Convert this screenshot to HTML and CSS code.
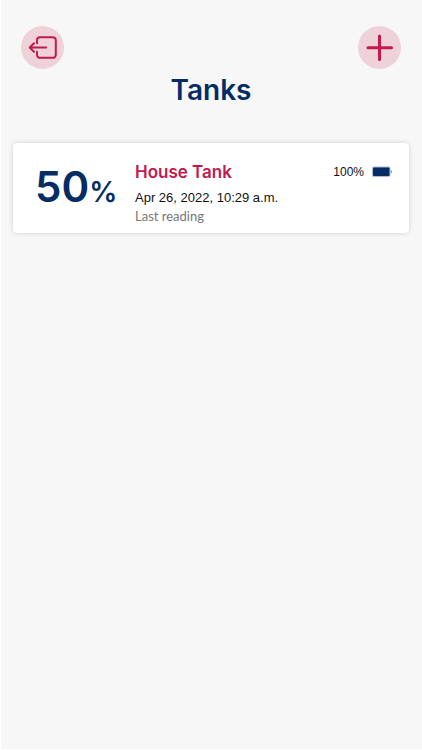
FILE: index.html
```html
<!DOCTYPE html>
<html lang="en">
<head>
<meta charset="utf-8">
<meta name="viewport" content="width=device-width, initial-scale=1">
<title>Tanks</title>
<link rel="stylesheet" href="styles.css">
</head>
<body>
<div class="screen">
  <header class="header">
    <nav class="toolbar">
      <button class="round-button" type="button" aria-label="Sign out">
        <svg width="43" height="43" viewBox="0 0 43 43" aria-hidden="true">
          <path d="M16 17.300V14.200a3 3 0 0 1 3-3H31.800a3 3 0 0 1 3 3V28.800a3 3 0 0 1-3 3H19a3 3 0 0 1-3-3V25.700M25.200 21.500H8.700M13 17.200L8.700 21.500L13 25.800"/>
        </svg>
      </button>
      <button class="round-button" type="button" aria-label="Add tank">
        <svg class="plus" width="43" height="43" viewBox="0 0 43 43" aria-hidden="true">
          <path d="M21.500 10V33.600M10 21.800H33.500"/>
        </svg>
      </button>
    </nav>
    <h1 class="title">Tanks</h1>
  </header>
  <main>
    <article class="card">
      <p class="level">50<span class="unit">%</span></p>
      <div class="details">
        <h2 class="name">House Tank</h2>
        <p class="date">Apr 26, 2022, 10:29 a.m.</p>
        <p class="caption">Last reading</p>
      </div>
      <div class="battery">
        <span>100%</span>
        <svg width="20" height="12" viewBox="0 0 20 12" aria-hidden="true">
          <rect class="shell" x="0" y=".5" width="18.500" height="10.500" rx="2"/>
          <rect class="charge" x="1" y="1.500" width="16.500" height="8.500" rx="1"/>
          <path class="tip" d="M18.800 4q1.200 .6 1.200 1.800t-1.200 1.800z"/>
        </svg>
      </div>
    </article>
  </main>
</div>
</body>
</html>
```
FILE: styles.css
```css
* {
  box-sizing: border-box;
}

body {
  margin: 0;
  background: #fff;
  font-family: Inter, "Liberation Sans", sans-serif;
  color: #111;
}

h1, h2, p {
  margin: 0;
}

.screen {
  min-height: calc(100vh - 1px);
  margin: 0 0 1px 1px;
  background: #f7f7f7;
}

.header {
  padding: 26px 21px 0 20px;
}

.toolbar {
  display: flex;
  justify-content: space-between;
}

.round-button {
  width: 43px;
  height: 43px;
  padding: 0;
  border: 0;
  border-radius: 50%;
  background: #efd1da;
}

.round-button svg {
  display: block;
  fill: none;
  stroke: #c2194f;
  stroke-width: 2;
  stroke-linecap: round;
  stroke-linejoin: round;
}

.round-button .plus {
  stroke-width: 3;
}

.title {
  font-size: 28px;
  line-height: 42px;
  font-weight: 600;
  text-align: center;
  color: #052c65;
}

.card {
  display: flex;
  align-items: flex-start;
  min-height: 90px;
  margin: 32px 13px 0 12px;
  padding: 17px 17px 7px 22px;
  border-radius: 4px;
  background: #fff;
  box-shadow: 0 0 5px rgba(0, 0, 0, 0.16);
}

.level {
  width: 100px;
  font-size: 42px;
  line-height: 54px;
  font-weight: 600;
  color: #052c65;
}

.unit {
  font-size: 28px;
}

.details {
  flex: 1;
}

.name {
  font-size: 17px;
  line-height: 24px;
  font-weight: 600;
  color: #c2194f;
}

.date {
  margin-top: 5px;
  font-family: "Liberation Sans", sans-serif;
  font-size: 13px;
  line-height: 18px;
}

.caption {
  font-family: Lato, sans-serif;
  font-size: 13px;
  line-height: 18px;
  color: #777;
}

.battery {
  display: flex;
  align-items: center;
  gap: 8px;
  font-family: "Liberation Sans", sans-serif;
  font-size: 12px;
  line-height: 24px;
}

.shell {
  fill: #a9bad1;
}

.charge {
  fill: #052c65;
}

.tip {
  fill: #6e83a3;
}
```
